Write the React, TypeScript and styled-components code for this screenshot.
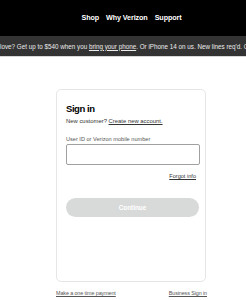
import styled, { createGlobalStyle } from "styled-components";

const GlobalStyle = createGlobalStyle`
  html, body {
    margin: 0;
    padding: 0;
    background: #ffffff;
    font-family: "Liberation Sans", Arial, sans-serif;
  }
  * {
    box-sizing: border-box;
  }
`;

const Header = styled.header`
  background: #000000;
  height: 36px;
  display: flex;
  align-items: center;
  justify-content: center;
  padding-left: 17px;
`;

const Nav = styled.nav`
  display: flex;
  gap: 7px;
  margin-top: -2px;

  & a {
    color: #ffffff;
    font-size: 7.2px;
    font-weight: 700;
    text-decoration: none;
    letter-spacing: -0.1px;
  }
`;

const Banner = styled.div`
  background: #333333;
  height: 21px;
  border-bottom: 1px solid #d8d8d8;
  display: flex;
  align-items: center;
  overflow: hidden;
  white-space: nowrap;
  color: #ececec;
  font-size: 6.3px;

  & u {
    text-underline-offset: 1px;
  }
`;

const Main = styled.main`
  width: 151px;
  margin: 32px 0 0 56px;
`;

const Card = styled.section`
  width: 150px;
  height: 193px;
  border: 1px solid #e6e6e6;
  border-radius: 5px;
  padding: 13px 8px 0 9px;
`;

const Title = styled.h1`
  margin: 0;
  font-size: 9.5px;
  line-height: 11px;
  font-weight: 700;
  letter-spacing: -0.45px;
  color: #000000;
`;

const SmallText = styled.p`
  margin: 3px 0 0;
  font-size: 5.9px;
  line-height: 8px;
  color: #333333;

  & a {
    color: #333333;
  }
`;

const Label = styled.label`
  display: block;
  margin-top: 11px;
  font-size: 5.6px;
  line-height: 7px;
  color: #555555;
`;

const Input = styled.div`
  margin-top: 1px;
  width: 134px;
  height: 21px;
  border: 1px solid #a0a0a0;
  border-radius: 2px;
`;

const Forgot = styled.a`
  display: block;
  margin-top: 7px;
  text-align: right;
  font-size: 5.6px;
  line-height: 8px;
  color: #333333;
  padding-right: 1px;
`;

const ContinueButton = styled.button`
  display: block;
  margin-top: 18px;
  width: 133px;
  height: 19px;
  border: none;
  border-radius: 10px;
  background: #d8dada;
  color: #ffffff;
  font-family: inherit;
  font-size: 6.4px;
  font-weight: 700;
  padding: 0;
`;

const Footer = styled.div`
  display: flex;
  justify-content: space-between;
  margin-top: 8px;

  & a {
    font-size: 5.4px;
    line-height: 7px;
    color: #555555;
    letter-spacing: -0.1px;
  }
`;

export default function App() {
  return (
    <>
      <GlobalStyle />
      <Header>
        <Nav>
          <a href="#">Shop</a>
          <a href="#">Why Verizon</a>
          <a href="#">Support</a>
        </Nav>
      </Header>
      <Banner>
        <span>
          love? Get up to $540 when you <u>bring your phone</u>. Or iPhone 14 on us. New lines req'd. Offer details
        </span>
      </Banner>
      <Main>
        <Card>
          <Title>Sign in</Title>
          <SmallText>
            New customer? <a href="#">Create new account.</a>
          </SmallText>
          <Label>User ID or Verizon mobile number</Label>
          <Input />
          <Forgot href="#">Forgot info</Forgot>
          <ContinueButton>Continue</ContinueButton>
        </Card>
        <Footer>
          <a href="#">Make a one time payment</a>
          <a href="#">Business Sign in</a>
        </Footer>
      </Main>
    </>
  );
}
